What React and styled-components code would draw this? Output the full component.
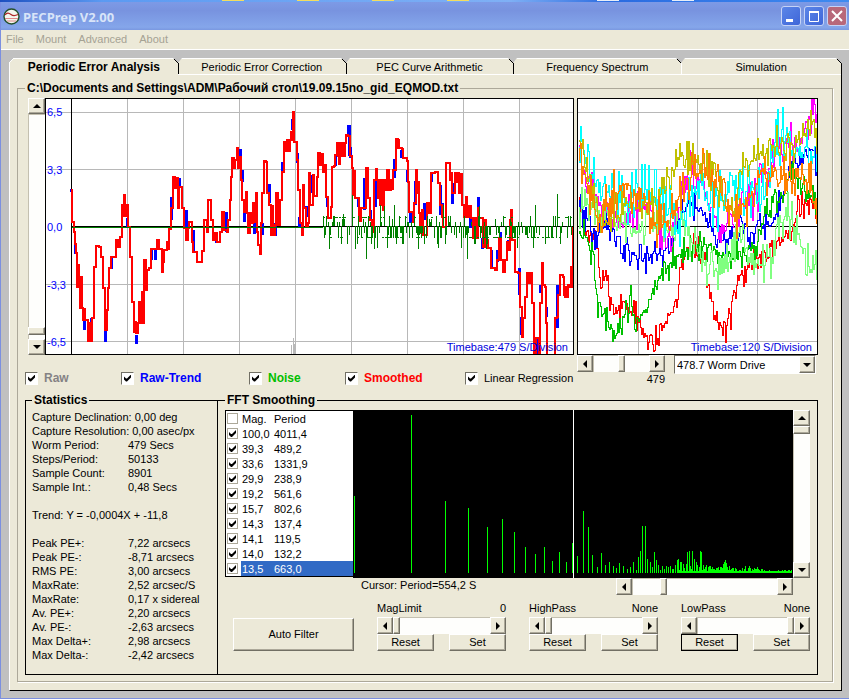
import React, { useState } from 'react';
import styled, { createGlobalStyle, css } from 'styled-components';

const face = '#ece9d8';
const light = '#ffffff';
const shade = '#aca899';
const dark = '#716f64';

const GlobalStyle = createGlobalStyle`
  * {
    box-sizing: border-box;
  }
  body {
    margin: 0;
    background: #c0c0c0;
    color: #000;
    font-family: "Liberation Sans", Arial, sans-serif;
    font-size: 11px;
    line-height: 14px;
  }
  button, input, select {
    margin: 0;
    font: inherit;
    color: inherit;
  }
`;

const raised = css`
  background: ${face};
  border: 1px solid;
  border-color: ${light} ${dark} ${dark} ${light};
  box-shadow: inset -1px -1px 0 ${shade};
`;

// Window frame
const Desktop = styled.div`
  display: flex;
  gap: 53px;
  height: 2px;
  padding-left: 222px;
  background: linear-gradient(90deg, #1c4fc0, #5b9af2 12%, #7fb0f5 60%, #2a6be0 72%, #3f8bf0);
`;

const DesktopIcon = styled.span`
  width: 22px;
  height: 1px;
  background: ${(p) => p.$color};
`;

const Window = styled.div`
  min-height: calc(100vh - 2px);
  background: #c0c0c0;
  border-left: 1px solid #7b8fe0;
  border-bottom: 1px solid #7b8fe0;
`;

const TitleBar = styled.header`
  display: flex;
  align-items: center;
  gap: 3px;
  height: 28px;
  padding: 0 2px;
  background: linear-gradient(#7d9ae6, #7893df 30%, #7f9ee6 65%, #85a6ea 90%, #7a98e0);
`;

const Title = styled.h1`
  flex: 1;
  margin: 0;
  padding-top: 1px;
  color: #d8e4f8;
  font: bold 13px/18px "Noto Sans", "Open Sans", sans-serif;
`;

const WindowButton = styled.button`
  display: flex;
  width: 20px;
  height: 20px;
  padding: 0;
  border: 1px solid #c5d3f7;
  border-radius: 3px;
  background: ${(p) => (p.$close ? '#b8687a' : 'linear-gradient(135deg, #5b86e8, #3f66d8)')};
`;

const MenuBar = styled.nav`
  display: flex;
  align-items: flex-start;
  gap: 12px;
  height: 20px;
  padding: 2px 5px 0;
  background: ${face};
  border-bottom: 1px solid ${light};
`;

const MenuItem = styled.button`
  padding: 0;
  border: 0;
  background: none;
  color: #a5a294;
`;

// Tabs
const Sheet = styled.main`
  margin: 8px 7px 7px 8px;
  background: ${face};
  border: 1px solid;
  border-color: ${light} #000 #000 ${light};
`;

const TabList = styled.div`
  display: grid;
  grid-template-columns: repeat(4, 168fr) 160fr;
  height: 16px;
`;

const TabButton = styled.button`
  position: relative;
  padding: 1px 0 0;
  border: 0;
  border-bottom: 1px solid ${(p) => (p.$active ? face : light)};
  background: none;
  font-weight: ${(p) => (p.$active ? 'bold' : 'normal')};
  font-size: ${(p) => (p.$active ? 12 : 11)}px;
  white-space: nowrap;
`;

const TabCorner = styled.svg`
  position: absolute;
  top: -1px;
  right: ${(p) => (p.$last ? -1 : -4)}px;
`;

const FirstCorner = styled.svg`
  position: absolute;
  top: -1px;
  left: -1px;
`;

// Frames
const Group = styled.fieldset`
  min-width: 0;
  margin: 0;
  border: 1px solid #000;
`;

const Caption = styled.legend`
  padding: 0 2px;
  background: ${face};
  font-weight: bold;
  font-size: 12px;
  line-height: 15px;
  white-space: nowrap;
`;

const FileGroup = styled(Group)`
  margin: 6px 8px 8px 7px;
  padding: 2px 14px 6px 7px;
  border-color: ${shade};
  box-shadow: 1px 1px 0 ${light};
`;

const Upper = styled.div`
  display: grid;
  grid-template-columns: 549fr 241fr;
  gap: 3px;
`;

const Column = styled.div`
  min-width: 0;
`;

const PlotRow = styled.div`
  display: flex;
  padding-left: 3px;
`;

const Plot = styled.div`
  position: relative;
  flex: 1;
  min-width: 0;
  background: #fff;
  svg {
    display: block;
    width: 100%;
    height: 257px;
  }
`;

const Axis = styled.div`
  position: absolute;
  top: 7px;
  bottom: 6px;
  left: 2px;
  display: flex;
  flex-direction: column;
  justify-content: space-between;
  color: #00f;
`;

const Timebase = styled.div`
  position: absolute;
  right: 6px;
  bottom: 1px;
  color: #00d;
`;

// Scroll bars
const ScrollBox = styled.div`
  display: flex;
  flex-direction: ${(p) => (p.$vertical ? 'column' : 'row')};
  flex: ${(p) => p.$flex || 'none'};
  min-width: 0;
  ${(p) => (p.$vertical ? 'width: 17px;' : 'height: 17px;')}
`;

const ScrollButton = styled.button`
  ${raised}
  display: flex;
  flex: none;
  align-items: center;
  justify-content: center;
  width: ${(p) => (p.$vertical ? 17 : 16)}px;
  height: ${(p) => (p.$vertical ? 16 : 17)}px;
  padding: 0;
`;

const thumb = css`
  appearance: none;
  ${raised}
  border-radius: 0;
  width: ${(p) => (p.$vertical ? 17 : 7)}px;
  height: ${(p) => (p.$vertical ? 8 : 17)}px;
`;

const Range = styled.input`
  appearance: none;
  flex: 1;
  min-width: 0;
  min-height: 0;
  width: ${(p) => (p.$vertical ? '17px' : '0')};
  height: ${(p) => (p.$vertical ? '0' : '17px')};
  writing-mode: ${(p) => (p.$vertical ? 'vertical-lr' : 'horizontal-tb')};
  background: #fefefc;
  box-shadow: inset 1px 1px 0 #c4c0b0;
  &::-webkit-slider-thumb {
    ${thumb}
  }
`;

// Check boxes
const CheckRow = styled.div`
  display: grid;
  grid-template-columns: 96fr 128fr 96fr 120fr 109fr;
  padding-top: 15px;
`;

const CheckLabel = styled.label`
  display: flex;
  align-items: center;
  gap: 6px;
  height: 16px;
  color: ${(p) => p.$color || '#000'};
  font-weight: ${(p) => (p.$color ? 'bold' : 'normal')};
  font-size: ${(p) => (p.$color ? 12 : 11)}px;
  white-space: nowrap;
`;

const Check = styled.input`
  appearance: none;
  display: block;
  flex: none;
  width: ${(p) => (p.$flat ? 11 : 13)}px;
  height: ${(p) => (p.$flat ? 11 : 13)}px;
  padding: ${(p) => (p.$flat ? 1 : 2)}px;
  background: #fff;
  border: 1px solid;
  border-color: ${(p) => (p.$flat ? shade : `${dark} ${light} ${light} ${dark}`)};
  &:checked::before {
    content: "";
    display: block;
    width: 7px;
    height: 7px;
    background: #000;
    clip-path: polygon(0 2px, 0 5px, 2px 7px, 3px 7px, 7px 3px, 7px 0, 3px 4px, 2px 4px);
  }
`;

// Worm drive controls
const DriveRow = styled.div`
  display: flex;
  align-items: flex-start;
  gap: 9px;
  padding-right: 2px;
`;

const DriveScroll = styled.div`
  flex: 88;
  min-width: 0;
`;

const Output = styled.output`
  display: block;
  text-align: right;
`;

const SelectBox = styled.div`
  position: relative;
  flex: 142;
  min-width: 0;
`;

const Select = styled.select`
  appearance: none;
  display: block;
  width: 100%;
  height: 19px;
  padding: 0 20px 0 2px;
  border: 1px solid;
  border-color: ${dark} ${light} ${light} ${dark};
  border-radius: 0;
  background: #fff;
`;

const SelectArrow = styled.span`
  ${raised}
  position: absolute;
  top: 1px;
  right: 1px;
  display: flex;
  align-items: center;
  justify-content: center;
  width: 16px;
  height: 17px;
  pointer-events: none;
`;

// Lower panels
const Lower = styled.div`
  display: grid;
  grid-template-columns: 193fr 600fr;
  margin-top: 7px;
`;

const StatsGroup = styled(Group)`
  padding: 2px 4px 12px 6px;
  white-space: nowrap;
`;

const Stat = styled.div`
  display: flex;
  gap: ${(p) => (p.$inline ? 3 : 0)}px;
  height: 14px;
`;

const StatName = styled.span`
  flex: none;
  width: ${(p) => (p.$inline ? 'auto' : '96px')};
`;

const FftGroup = styled(Group)`
  padding: 2px 7px 0 7px;
  border-left: 0;
`;

const FftRow = styled.div`
  display: flex;
`;

const List = styled.table`
  flex: none;
  width: 128px;
  height: 167px;
  border-collapse: separate;
  border-spacing: 0;
  border: 1px solid #000;
  border-right: 0;
  background: #fff;
  th, td {
    height: 15px;
    padding: 0 0 0 1px;
    font-weight: normal;
    text-align: left;
  }
`;

const Row = styled.tr`
  td:not(:first-child) {
    background: ${(p) => (p.$selected ? '#316ac5' : '#fff')};
    color: ${(p) => (p.$selected ? '#fff' : '#000')};
  }
`;

const Spectrum = styled.div`
  flex: 1;
  min-width: 0;
  background: #000;
  svg {
    display: block;
    width: 100%;
    height: 168px;
  }
`;

const CursorRow = styled.div`
  display: flex;
  justify-content: space-between;
  padding: 0 17px 0 136px;
`;

const FilterRow = styled.div`
  display: grid;
  grid-template-columns: 121fr 129fr 129fr 129fr;
  align-items: end;
  gap: 23px;
  padding: 6px 0 0 8px;
`;

const Filter = styled.div`
  min-width: 0;
`;

const FilterHead = styled.div`
  display: flex;
  justify-content: space-between;
  height: 16px;
`;

const FilterButtons = styled.div`
  display: flex;
  justify-content: space-between;
`;

const PushButton = styled.button`
  ${raised}
  width: ${(p) => (p.$big ? '100%' : '57px')};
  height: ${(p) => (p.$big ? 33 : 17)}px;
  padding: 0;
  line-height: 13px;
  ${(p) => p.$focused && 'outline: 1px solid #000; outline-offset: -1px;'}
`;

const tabs = [
  'Periodic Error Analysis',
  'Periodic Error Correction',
  'PEC Curve Arithmetic',
  'Frequency Spectrum',
  'Simulation',
];

const desktopIcons = ['#f4dc60', '#f4dc60', '#f4dc60', '#f4dc60', 'transparent', '#e8eef8', '#e8eef8'];

const checks = [
  ['Raw', '#848284'],
  ['Raw-Trend', '#0000ff'],
  ['Noise', '#00c000'],
  ['Smoothed', '#ff0000'],
  ['Linear Regression', null],
];

const stats = [
  ['Capture Declination:', '0,00 deg', true],
  ['Capture Resolution:', '0,00 asec/px', true],
  ['Worm Period:', '479 Secs'],
  ['Steps/Period:', '50133'],
  ['Sample Count:', '8901'],
  ['Sample Int.:', '0,48 Secs'],
  ['', ''],
  ['Trend:', 'Y = -0,0004X + -11,8', true],
  ['', ''],
  ['Peak PE+:', '7,22 arcsecs'],
  ['Peak PE-:', '-8,71 arcsecs'],
  ['RMS PE:', '3,00 arcsecs'],
  ['MaxRate:', '2,52 arcsec/S'],
  ['MaxRate:', '0,17 x sidereal'],
  ['Av. PE+:', '2,20 arcsecs'],
  ['Av. PE-:', '-2,63 arcsecs'],
  ['Max Delta+:', '2,98 arcsecs'],
  ['Max Delta-:', '-2,42 arcsecs'],
];

const components = [
  ['100,0', '4011,4'],
  ['39,3', '489,2'],
  ['33,6', '1331,9'],
  ['29,9', '238,9'],
  ['19,2', '561,6'],
  ['15,7', '802,6'],
  ['14,3', '137,4'],
  ['14,1', '119,5'],
  ['14,0', '132,2'],
  ['13,5', '663,0'],
];

const parse = (text) => text.trim().split(/\s+/).map((p) => p.split(',').map(Number));

// Smoothed curve, as x,y pairs
const smoothed = parse(`
  26,92 27,124 29,134 30,146 31,155 32,189 33,167 34,189 35,210 36,179 37,210 38,222 39,211 40,222
  42,222 43,243 44,225 46,243 47,220 49,169 51,148 54,149 56,148 56,159 58,190 60,232 62,212
  63,190 64,170 66,159 70,159 71,142 73,149 75,139 77,107 78,118 79,97 80,118 81,107 83,129
  85,159 87,204 89,234 90,224 91,235 93,225 94,204 95,225 97,194 98,225 99,162 101,192 102,172
  104,170 106,151 110,151 112,142 114,151 117,174 118,164 119,152 122,144 123,151 124,131
  126,110 128,79 130,90 132,80 133,110 134,89 137,90 137,110 139,130 141,142 143,130 144,124
  147,144 148,154 152,164 155,164 157,153 159,152 159,122 162,134 163,102 166,101 166,122
  168,142 170,135 172,144 174,144 175,134 177,114 179,132 182,134 183,122 185,102 186,79
  187,60 189,70 190,62 192,50 193,70 194,59 196,82 197,102 199,114 201,94 202,115 203,135
  205,115 206,125 208,105 209,124 211,95 212,134 213,147 215,156 216,125 217,95 219,63 221,64
  222,95 223,95 224,107 226,137 228,107 228,137 230,127 231,95 233,127 235,102 237,74 239,44
  241,53 242,42 243,53 245,42 246,34 247,42 248,14 249,44 250,44 252,62 253,92 255,125 257,137
  258,87 259,110 261,129 263,125 264,75 265,107 266,107 268,77 269,98 272,79 273,55 275,67
  277,56 278,74 280,67 281,99 283,120 286,109 287,69 289,68 290,57 292,45 293,58 294,66 295,45
  296,58 297,45 298,58 300,45 301,37 303,38 305,58 307,70 308,97 310,72 310,100 312,100 314,123
  316,110 319,110 321,70 323,100 325,122 327,134 329,82 331,71 332,82 333,100 334,82 335,107
  336,82 337,107 338,112 339,82 341,92 342,72 344,92 346,82 348,92 348,72 351,41 353,50 354,41
  354,50 357,51 358,60 362,63 363,84 364,114 368,124 369,105 371,72 372,95 373,84 374,115
  375,135 377,112 378,137 380,137 382,105 384,115 386,75 390,74 393,75 393,85 395,107 397,119
  398,129 401,115 401,65 404,65 405,82 406,75 407,95 409,95 410,75 412,84 413,75 414,95 416,76
  417,107 419,119 421,99 422,119 424,108 426,120 428,140 430,120 431,140 433,109 433,120
  437,120 438,149 440,122 441,142 443,150 446,170 450,172 452,162 454,140 456,162 458,174
  460,162 462,144 464,152 465,122 466,112 467,142 468,142 470,174 473,175 475,209 477,239
  478,220 480,199 482,175 484,185 486,175 487,205 489,257 491,240 494,257 495,205 497,165
  498,187 500,189 501,225 502,257 510,257 510,220 512,219 513,197 515,177 518,179 519,197
  520,199 521,189 522,199 523,187 525,189 526,169 527,189 528,129`);

// Places where the raw curve stands clear of the smoothed one: x,from,to
const rawTrend = parse(`
  26,91,94 30,145,156 39,220,232 46,220,231 60,212,244 66,160,171 82,120,129 91,237,246 106,152,162
  110,151,162 126,99,122 134,80,90 141,112,130 148,132,154 118,153,163 171,140,145 178,113,125
  181,114,134 188,61,70 195,51,71 197,72,84 199,115,124 209,122,136 217,125,137 224,86,105
  230,125,138 231,107,125 237,64,74 247,21,32 252,55,65 254,119,129 261,108,119 267,77,95
  268,77,95 282,99,109 290,57,68 299,48,58 303,27,37 304,27,58 305,49,60 313,101,109 319,80,112
  325,112,122 330,81,109 342,80,92 349,61,80 356,52,60 362,72,84 365,115,125 370,83,107
  379,105,122 386,74,84 395,87,117 397,105,117 407,85,106 425,120,130 433,99,119 437,140,151
  446,152,170 452,152,164 455,134,150 463,142,152 474,170,197 476,219,237 484,175,185
  491,239,257 495,187,195 501,209,219 512,187,230 521,197,200 527,179,189`);

// Noise spikes: x,y
const spikes = {
  281: 118, 284: 151, 289: 118, 298: 116, 307: 97, 310: 151, 313: 118, 321: 161, 329: 151, 332: 150,
  335: 107, 339: 108, 342: 150, 349: 107, 360: 118, 373: 151, 382: 118, 393: 150, 398: 107,
  416: 150, 422: 161, 434: 108, 441: 151, 458: 118, 472: 150, 485: 118, 488: 150, 490: 107,
  510: 118, 512: 96, 525: 118,
};

// Small repeatable generator, so that the traces stay the same on every draw
const makeRandom = (seed) => {
  let s = seed;
  return () => {
    s = (s * 16807) % 2147483647;
    return s / 2147483647;
  };
};

const noisePath = () => {
  const random = makeRandom(77);
  const levels = [118, 140, 140, 135, 137, 124, 121, 146];
  let d = 'M26.5 129.5H277.5';
  for (let x = 278; x < 528; x += 1) {
    const y = spikes[x] || levels[Math.floor(random() * levels.length)];
    if (spikes[x] || random() < 0.62) d += `M${x}.5 128V${y}`;
    if (random() < 0.3) d += `M${x} ${y > 128 ? 139 : 119}.5h2`;
  }
  return d;
};

const stepPath = (points) =>
  points.map(([x, y], i) => (i ? `H${x}V${y}` : `M${x} ${y}`)).join('');

// Worm cycles: colour, jitter, line
const cycles = [
  ['#ff0000', 17, '1,99 8,129 20,152 23,192 28,172 31,195 38,219 43,199 51,212 61,222 71,240 81,239 93,212 100,199 103,159 110,145 126,155 131,189 140,222 148,229 153,215 156,192 166,172 173,162 183,154 200,145 213,135 220,109 233,99 240,125'],
  ['#0000ff', 17, '1,102 8,122 18,137 26,124 40,139 53,155 61,162 76,155 93,152 100,125 110,102 121,109 133,129 143,142 156,142 163,115 170,139 180,129 193,125 200,109 210,82 216,62 226,54 236,52 240,82'],
  ['#00c000', 18, '1,135 10,140 15,162 20,202 30,225 38,237 48,212 53,202 58,222 68,215 75,192 80,179 90,169 96,159 113,149 133,147 146,159 163,155 178,145 185,122 193,112 206,92 213,65 223,85 231,99 240,105'],
  ['#ff00ff', 24, '1,59 13,85 26,112 36,125 53,115 70,109 80,132 93,149 100,115 110,72 123,79 136,122 150,129 163,109 176,99 190,72 200,45 220,45 226,28 236,13 240,25'],
  ['#80ff80', 24, '1,109 13,112 26,115 43,129 56,135 76,115 93,139 106,125 116,145 136,175 150,165 163,139 176,172 193,159 200,122 210,115 220,135 230,165 240,177'],
  ['#00ffff', 32, '1,49 13,75 23,92 33,92 50,105 70,92 86,109 100,125 113,92 126,89 140,105 153,82 166,89 180,92 193,72 200,39 208,35 216,52 240,55'],
  ['#c0c000', 20, '1,42 8,59 15,92 21,125 30,122 43,105 60,105 80,109 86,82 96,69 105,58 116,62 136,75 145,102 156,112 165,66 186,54 200,45 213,50 226,38 233,22 240,52'],
  ['#ff8000', 28, '1,62 10,89 20,115 30,102 46,89 63,95 76,125 96,115 106,82 126,72 143,95 156,119 173,99 183,69 196,85 223,75 233,89 240,125'],
];

const cyclePath = (line, jitter, seed) => {
  const random = makeRandom(seed);
  const points = parse(line);
  let d = `M${points[0][0]}.5 ${points[0][1]}.5`;
  for (let i = 1; i < points.length; i += 1) {
    const [x0, y0] = points[i - 1];
    const [x1, y1] = points[i];
    for (let x = x0 + 1; x <= x1; x += 1) {
      const base = y0 + ((y1 - y0) * (x - x0)) / (x1 - x0);
      const wide = random() < 0.5 ? 1.9 : 0.5;
      d += `H${x}.5V${Math.max(1, Math.round(base + (random() - 0.5) * jitter * wide))}.5`;
    }
  }
  return d;
};

// Spectrum lines: x,top
const peaks = parse(`
  1,86 58,5 92,91 115,98 134,117 149,109 161,122 172,137 182,144 191,137 199,151 206,142 213,152
  219,133 224,146 230,101 235,117 239,145 244,157 248,143 252,155 256,152 260,156 263,158 266,153
  270,156 274,159 277,157 280,152 283,160 285,147 287,141 289,116 292,116 294,149 297,152 299,157
  301,142 303,150 305,155 307,160 309,156 311,159 313,156 315,157 317,156 319,159 320,159 322,155
  324,150 325,149 327,152 328,152 330,154 331,158 333,154 334,142 336,141 337,156 339,141 341,149
  343,152 344,155 347,141 348,142 350,155 352,158 353,155 355,157 357,156 359,157 361,159 363,158
  365,157 367,159 369,158 370,154 371,152 372,150 373,153 374,157 375,160`);

const spectrumPath = () => {
  const random = makeRandom(12);
  let d = peaks.map(([x, y]) => `M${x}.5 ${y}V163`).join('');
  for (let x = 324; x < 439; x += 1) {
    const room = x < 410 ? 7 : 4;
    d += `M${x}.5 ${161 - Math.floor(random() * random() * room)}V163`;
  }
  return d;
};

const arrows = {
  up: 'M4 2L8 6H0Z',
  down: 'M0 2H8L4 6Z',
  left: 'M2 4L6 0V8Z',
  right: 'M6 4L2 0V8Z',
};

const Arrow = ({ dir }) => (
  <svg width="8" height="8" aria-hidden="true">
    <path d={arrows[dir]} />
  </svg>
);

const ScrollBar = ({ label, value, vertical, flex }) => (
  <ScrollBox $vertical={vertical} $flex={flex}>
    <ScrollButton type="button" $vertical={vertical} aria-label={`${label} back`}>
      <Arrow dir={vertical ? 'up' : 'left'} />
    </ScrollButton>
    <Range type="range" aria-label={label} defaultValue={value} $vertical={vertical} />
    <ScrollButton type="button" $vertical={vertical} aria-label={`${label} forward`}>
      <Arrow dir={vertical ? 'down' : 'right'} />
    </ScrollButton>
  </ScrollBox>
);

const Grid = ({ width, columns }) => (
  <g stroke="#b8b8b8" fill="none">
    {[14, 71, 186, 243].map((y) => (
      <path key={y} d={`M0 ${y}.5H${width}`} />
    ))}
    {columns.map((x) => (
      <path key={x} d={`M${x}.5 0V257`} />
    ))}
  </g>
);

const ErrorPlot = () => (
  <Plot>
    <svg viewBox="0 0 529 257" preserveAspectRatio="none" shapeRendering="crispEdges">
      <Grid width={529} columns={[82, 138, 194, 250, 306, 362, 418, 474]} />
      <path d="M26.5 0V257M26 128.5H529" stroke="#000" />
      <path d="M246.5 257V247M248.5 257V240M249.5 257V246" stroke="#b8b8b8" />
      <path d={rawTrend.map(([x, a, b]) => `M${x} ${a}V${b}`).join('')} stroke="#00f" strokeWidth="3" />
      <path d={stepPath(smoothed)} stroke="#f00" strokeWidth="2" fill="none" />
      <path d={noisePath()} stroke="#008000" fill="none" />
      <rect x=".5" y=".5" width="528" height="256" fill="none" stroke="#000" />
    </svg>
    <Axis>
      <span>6,5</span>
      <span>3,3</span>
      <span>0,0</span>
      <span>-3,3</span>
      <span>-6,5</span>
    </Axis>
    <Timebase>Timebase:479 S/Division</Timebase>
  </Plot>
);

const CyclePlot = () => (
  <Plot>
    <svg viewBox="0 0 241 257" preserveAspectRatio="none" shapeRendering="crispEdges">
      <Grid width={241} columns={[61, 120, 180]} />
      <path d="M0 128.5H241" stroke="#000" />
      {cycles.map(([color, jitter, line], i) => (
        <path key={color} d={cyclePath(line, jitter, 311 + i * 97)} stroke={color} fill="none" />
      ))}
      <rect x=".5" y=".5" width="240" height="256" fill="none" stroke="#000" />
    </svg>
    <Timebase>Timebase:120 S/Division</Timebase>
  </Plot>
);

const FilterControl = ({ name, text, value, focused }) => (
  <Filter>
    <FilterHead>
      <span>{name}</span>
      <span>{text}</span>
    </FilterHead>
    <ScrollBar label={name} value={value} />
    <FilterButtons>
      <PushButton type="button" $focused={focused}>Reset</PushButton>
      <PushButton type="button">Set</PushButton>
    </FilterButtons>
  </Filter>
);

const App = () => {
  const [active, setActive] = useState(0);

  return (
    <>
      <GlobalStyle />
      <Desktop>
        {desktopIcons.map((color, i) => <DesktopIcon key={i} $color={color} />)}
      </Desktop>
      <Window>
        <TitleBar>
          <svg width="17" height="17" viewBox="0 0 17 17" aria-hidden="true">
            <circle cx="8.5" cy="8.5" r="7.5" fill="#f4f6ee" stroke="#24502c" strokeWidth="1.4" />
            <path d="M2 7C4 4 6 5 8 6.5S12 8 15 6.5" fill="none" stroke="#b02828" strokeWidth="1.3" />
            <path d="M2 10.5H15M4 13H13" fill="none" stroke="#e08888" />
          </svg>
          <Title>PECPrep V2.00</Title>
          <WindowButton type="button" aria-label="Minimize">
            <svg width="18" height="18"><path d="M4 12H11V15H4Z" fill="#fff" /></svg>
          </WindowButton>
          <WindowButton type="button" aria-label="Maximize">
            <svg width="18" height="18">
              <path d="M4 5H14M4.5 4V14.5H13.5V4" fill="none" stroke="#fff" />
              <path d="M4 4H14V6H4Z" fill="#fff" />
            </svg>
          </WindowButton>
          <WindowButton type="button" aria-label="Close" $close>
            <svg width="18" height="18"><path d="M4 4L14 14M14 4L4 14" stroke="#fff" strokeWidth="2" /></svg>
          </WindowButton>
        </TitleBar>
        <MenuBar>
          <MenuItem type="button">File</MenuItem>
          <MenuItem type="button">Mount</MenuItem>
          <MenuItem type="button">Advanced</MenuItem>
          <MenuItem type="button">About</MenuItem>
        </MenuBar>

        <Sheet>
          <TabList role="tablist">
            {tabs.map((tab, i) => (
              <TabButton
                key={tab}
                type="button"
                role="tab"
                aria-selected={i === active}
                $active={i === active}
                onClick={() => setActive(i)}
              >
                {i === 0 && (
                  <FirstCorner width="6" height="6" aria-hidden="true">
                    <path d="M0 0H5L0 5Z" fill="#c0c0c0" />
                    <path d="M5 0L0 5" stroke="#fff" />
                  </FirstCorner>
                )}
                {tab}
                <TabCorner width="9" height="17" $last={i === 4} aria-hidden="true">
                  <path d={i === 4 ? 'M3 0H9V6Z' : 'M0 0H9L5 5Z'} fill="#c0c0c0" />
                  <path d={i === 4 ? 'M4 1L8.5 5.5V17' : 'M1 1L5.5 5.5'} stroke="#000" fill="none" />
                  {i < 4 && <path d="M5.5 5V17" stroke={i === 3 ? '#fff' : '#000'} />}
                </TabCorner>
              </TabButton>
            ))}
          </TabList>

          <FileGroup>
            <Caption>C:\Documents and Settings\ADM\Рабочий стол\19.09.15no_gid_EQMOD.txt</Caption>
            <Upper>
              <Column>
                <PlotRow>
                  <ScrollBar label="Scale" value={98} vertical />
                  <ErrorPlot />
                </PlotRow>
                <CheckRow>
                  {checks.map(([label, color]) => (
                    <CheckLabel key={label} $color={color}>
                      <Check type="checkbox" defaultChecked />
                      {label}
                    </CheckLabel>
                  ))}
                </CheckRow>
              </Column>
              <Column>
                <CyclePlot />
                <DriveRow>
                  <DriveScroll>
                    <ScrollBar label="Worm period" value={50} />
                    <Output>479</Output>
                  </DriveScroll>
                  <SelectBox>
                    <Select aria-label="Worm drive">
                      <option>478.7 Worm Drive</option>
                    </Select>
                    <SelectArrow><Arrow dir="down" /></SelectArrow>
                  </SelectBox>
                </DriveRow>
              </Column>
            </Upper>

            <Lower>
              <StatsGroup>
                <Caption>Statistics</Caption>
                {stats.map(([name, value, inline], i) => (
                  <Stat key={i} $inline={inline}>
                    <StatName $inline={inline}>{name}</StatName>
                    <span>{value}</span>
                  </Stat>
                ))}
              </StatsGroup>
              <FftGroup>
                <Caption>FFT Smoothing</Caption>
                <FftRow>
                  <List>
                    <colgroup>
                      <col width="15" />
                      <col width="32" />
                      <col />
                    </colgroup>
                    <thead>
                      <tr>
                        <th><Check type="checkbox" $flat aria-label="All" /></th>
                        <th>Mag.</th>
                        <th>Period</th>
                      </tr>
                    </thead>
                    <tbody>
                      {components.map(([mag, period], i) => (
                        <Row key={period} $selected={i === components.length - 1}>
                          <td><Check type="checkbox" $flat defaultChecked aria-label={period} /></td>
                          <td>{mag}</td>
                          <td>{period}</td>
                        </Row>
                      ))}
                    </tbody>
                  </List>
                  <Spectrum>
                    <svg viewBox="0 0 440 168" preserveAspectRatio="none" shapeRendering="crispEdges">
                      <path d={spectrumPath()} stroke="#0f0" />
                      <path d="M220.5 0V168" stroke="#fff" />
                    </svg>
                  </Spectrum>
                  <ScrollBar label="Gain" value={0} vertical />
                </FftRow>
                <CursorRow>
                  <span>Cursor: Period=554,2 S</span>
                  <ScrollBar label="Cursor position" value={20} flex="0 0 41%" />
                </CursorRow>
                <FilterRow>
                  <PushButton type="button" $big>Auto Filter</PushButton>
                  <FilterControl name="MagLimit" text="0" value={0} />
                  <FilterControl name="HighPass" text="None" value={0} />
                  <FilterControl name="LowPass" text="None" value={100} focused />
                </FilterRow>
              </FftGroup>
            </Lower>
          </FileGroup>
        </Sheet>
      </Window>
    </>
  );
};

export default App;
